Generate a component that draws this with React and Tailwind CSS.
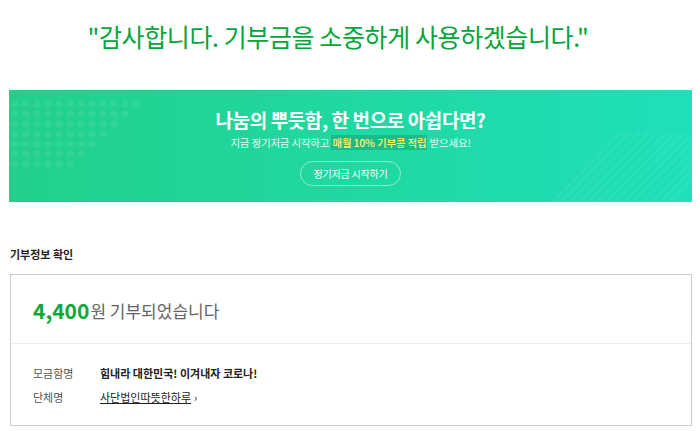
const font = { fontFamily: '"Noto Sans CJK KR", "Noto Sans", sans-serif' };

function Dots() {
  const dots = [];
  for (let r = 0; r < 7; r++) {
    for (let c = 0; c < 12 - r; c++) {
      dots.push(<circle key={r + "-" + c} cx={6 + c * 11} cy={6 + r * 10} r="3.6" fill="#ffffff" fillOpacity="0.07" />);
    }
  }
  return (
    <svg className="absolute left-0 top-[8px]" width="140" height="76">
      {dots}
    </svg>
  );
}

function Stripes() {
  const lines = [];
  for (let i = 0; i < 14; i++) {
    lines.push(<line key={i} x1={i * 9} y1="70" x2={i * 9 + 70} y2="0" stroke="#ffffff" strokeOpacity="0.05" strokeWidth="3" />);
  }
  return (
    <svg className="absolute right-0 bottom-0" width="140" height="70">
      {lines}
    </svg>
  );
}

export default function App() {
  return (
    <div className="w-[700px] h-[431px] bg-white overflow-hidden" style={font}>
      <h1 className="pt-[20px] pr-[24px] text-center text-[25px] leading-[32px] text-[#05a53b] tracking-[-0.4px]">
        "감사합니다. 기부금을 소중하게 사용하겠습니다."
      </h1>

      <div className="relative mt-[38px] ml-[9px] mr-[8px] h-[112px] overflow-hidden bg-gradient-to-r from-[#22d08a] to-[#1ee0b9] flex flex-col items-center">
        <Dots />
        <Stripes />
        <p className="relative mt-[17px] text-[19px] leading-[26px] font-bold text-white tracking-[-0.4px]">
          나눔의 뿌듯함, 한 번으로 아쉽다면?
        </p>
        <p className="relative mt-[2px] text-[10.5px] leading-[16px] text-white/90 tracking-[-0.2px]">
          지금 정기저금 시작하고{" "}
          <span className="bg-[#1aa77a]/60 text-[#fff36b] font-medium px-[1px]">매월 10% 기부콩 적립</span>{" "}
          받으세요!
        </p>
        <button className="relative mt-[10px] h-[25px] px-[12px] rounded-full border border-white/50 text-[10px] text-white tracking-[-0.2px]">
          정기저금 시작하기
        </button>
      </div>

      <h2 className="mt-[44px] ml-[10px] text-[11px] leading-[16px] font-bold text-[#222]">기부정보 확인</h2>

      <div className="mt-[12px] ml-[10px] mr-[8px] h-[152px] border border-[#cccccc]">
        <div className="h-[69px] flex items-center pl-[22px] pt-[4px] border-b border-[#eeeeee]">
          <span className="text-[21px] font-bold text-[#0aa83a]">4,400</span>
          <span className="text-[17px] text-[#666] ml-[1px]">원 기부되었습니다</span>
        </div>
        <div className="pl-[22px] pt-[21px] text-[11px] leading-[16px]">
          <div className="flex">
            <span className="w-[67px] text-[#555]">모금함명</span>
            <span className="font-bold text-[#222]">힘내라 대한민국! 이겨내자 코로나!</span>
          </div>
          <div className="flex mt-[8px]">
            <span className="w-[67px] text-[#555]">단체명</span>
            <span className="text-[#222] underline">사단법인따뜻한하루</span>
            <span className="text-[#222] ml-[3px]">›</span>
          </div>
        </div>
      </div>
    </div>
  );
}
